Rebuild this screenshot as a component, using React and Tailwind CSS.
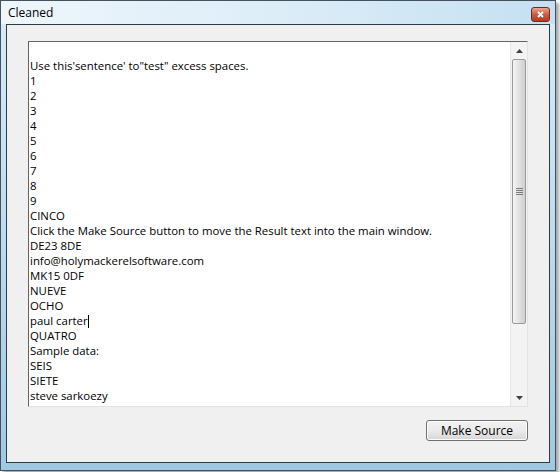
const lines = [
  '',
  "Use this'sentence' to\"test\" excess spaces.",
  '1',
  '2',
  '3',
  '4',
  '5',
  '6',
  '7',
  '8',
  '9',
  'CINCO',
  'Click the Make Source button to move the Result text into the main window.',
  'DE23 8DE',
  'info@holymackerelsoftware.com',
  'MK15 0DF',
  'NUEVE',
  'OCHO',
  'paul carter',
  'QUATRO',
  'Sample data:',
  'SEIS',
  'SIETE',
  'steve sarkoezy',
];

const font = { fontFamily: '"Segoe UI", "Open Sans", sans-serif' };

function ScrollBar() {
  return (
    <div className="flex w-[17px] flex-col bg-[#f3f3f3] border-l border-[#e6e6e6]">
      <div className="flex h-[17px] items-center justify-center">
        <svg width="7" height="4" viewBox="0 0 7 4">
          <path d="M0 4 L3.5 0 L7 4 Z" fill="#404040" />
        </svg>
      </div>
      <div className="mx-[1px] flex h-[265px] items-center justify-center rounded-[2px] border border-[#9a9a9a] bg-gradient-to-r from-[#f4f4f4] via-[#e2e2e2] to-[#cfcfcf]">
        <div className="flex flex-col gap-[1px]">
          <div className="h-[1px] w-[7px] bg-[#7a7a7a]" />
          <div className="h-[1px] w-[7px] bg-[#7a7a7a]" />
          <div className="h-[1px] w-[7px] bg-[#7a7a7a]" />
          <div className="h-[1px] w-[7px] bg-[#7a7a7a]" />
        </div>
      </div>
      <div className="flex-1" />
      <div className="flex h-[17px] items-center justify-center">
        <svg width="7" height="4" viewBox="0 0 7 4">
          <path d="M0 0 L7 0 L3.5 4 Z" fill="#404040" />
        </svg>
      </div>
    </div>
  );
}

export default function App() {
  return (
    <div className="h-[472px] w-[560px] bg-white" style={font}>
      <div className="flex h-[471px] w-[556px] flex-col border border-[#44525e] bg-gradient-to-b from-[#d9ecf8] via-[#bcdcef] to-[#9fc9e2] shadow-[3px_3px_3px_rgba(0,0,0,0.35)]">
        {/* title bar */}
        <div className="relative flex h-[23px] items-center px-[7px] bg-gradient-to-r from-[#eef6fc] via-[#dcedf8] to-[#c4e0f2]">
          <span className="text-[12px] text-black">Cleaned</span>
          <div className="absolute right-[5px] top-[6px] flex h-[15px] w-[19px] items-center justify-center rounded-[3px] border border-[#6e2b1e] bg-gradient-to-b from-[#e9a690] via-[#cf5a3f] to-[#b8391f]">
            <svg width="7" height="7" viewBox="0 0 7 7">
              <path d="M1 1 L6 6 M6 1 L1 6" stroke="white" strokeWidth="1.8" />
            </svg>
          </div>
        </div>
        {/* client area */}
        <div className="mx-[5px] mb-[7px] flex flex-1 flex-col border border-[#2e3a44] bg-[#f0f0f0] px-[21px] pt-[16px]">
          <div className="flex h-[366px] border-t border-l border-[#646464] border-r border-r-[#e3e3e3] border-b border-b-[#e3e3e3] bg-white">
            <div className="flex-1 pl-[1px] pt-[1px] text-[11.4px] leading-[15px] text-black">
              {lines.map((t, i) => (
                <div key={i} className="h-[15px] overflow-hidden whitespace-pre">
                  {t}
                  {t === 'paul carter' && (
                    <span className="inline-block h-[14px] w-[1px] bg-black align-middle" />
                  )}
                </div>
              ))}
            </div>
            <ScrollBar />
          </div>
          <div className="flex justify-end pt-[13px]">
            <button className="h-[21px] w-[102px] rounded-[3px] border border-[#707070] bg-gradient-to-b from-[#f2f2f2] via-[#ebebeb] to-[#d6d6d6] text-[12px] text-black shadow-[inset_0_0_0_1px_#fcfcfc]">
              Make Source
            </button>
          </div>
        </div>
      </div>
    </div>
  );
}
